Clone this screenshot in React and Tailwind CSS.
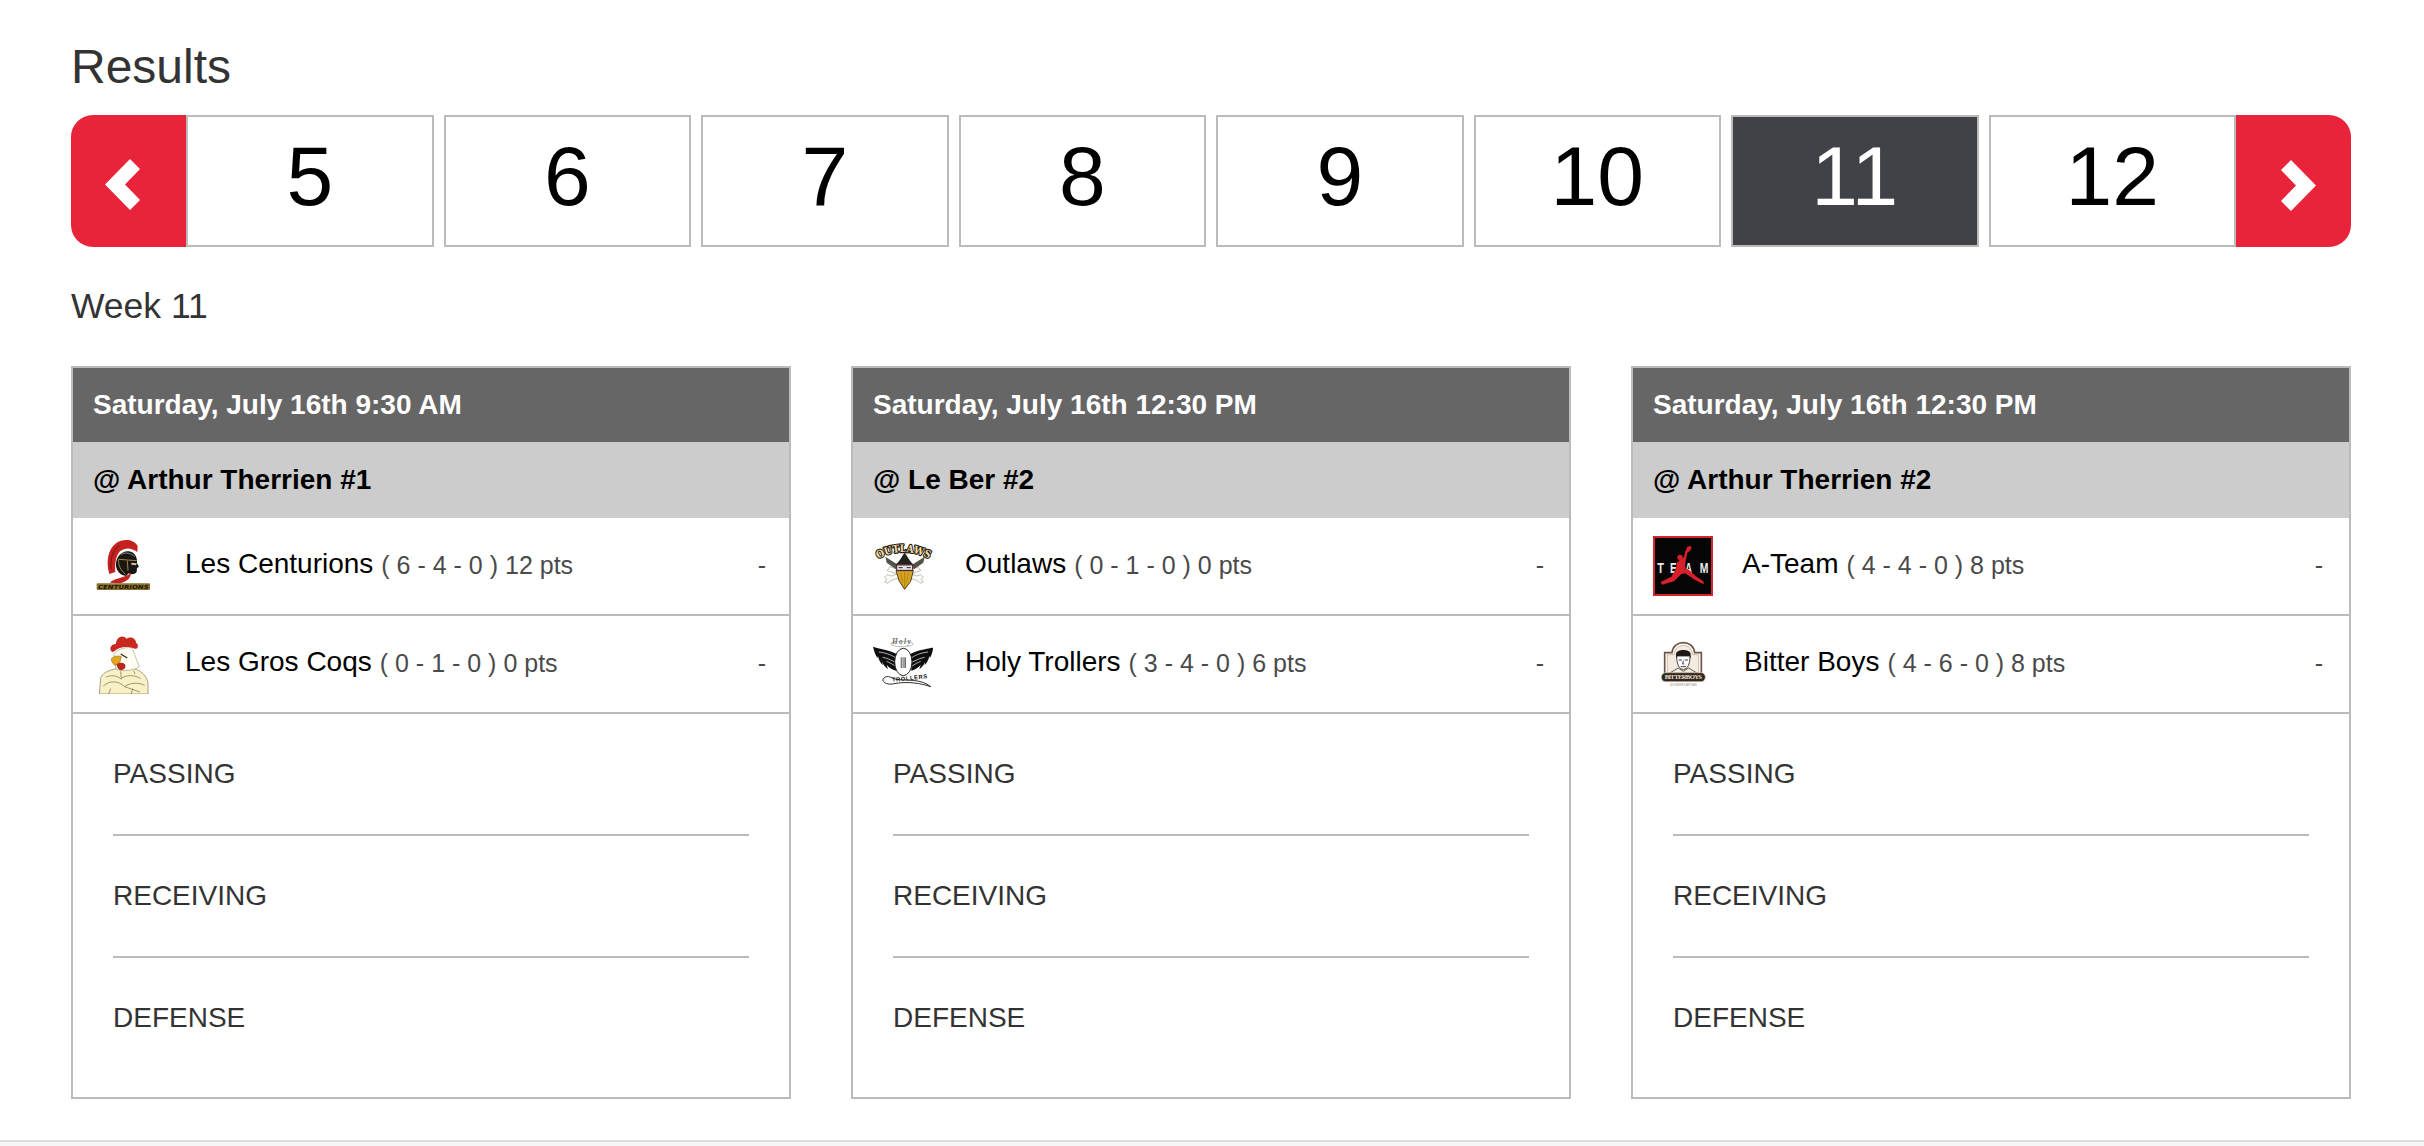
import React from "react";

function Chevron({ flip }) {
  return (
    <svg width="35" height="52" viewBox="0 0 35 52" className={flip ? "rotate-180" : ""}>
      <polygon points="0,25.5 25,0 35,10 20,25.5 35,41 25,51" fill="#ffffff" />
    </svg>
  );
}

function Centurions() {
  return (
    <svg width="60" height="60" viewBox="9 18 180 180">
      <path d="M58 132 C48 100 52 60 78 40 C98 26 130 26 143 48 L142 66 C125 52 104 52 90 64 C78 76 74 100 76 126 Z" fill="#c4211f" />
      <path d="M64 118 C60 92 66 62 88 46" fill="none" stroke="#7d1112" strokeWidth="3" />
      <path d="M78 108 C76 82 94 62 116 64 C134 66 143 82 141 100 L147 110 L141 114 L140 126 C134 134 122 134 116 130 L108 138 C92 136 80 124 78 108 Z" fill="#191715" />
      <path d="M86 88 L140 92 M112 92 L114 122 M86 88 C84 104 92 122 106 132" fill="none" stroke="#a9843a" strokeWidth="3" />
      <path d="M92 74 C104 66 122 68 134 80" fill="none" stroke="#8d8a82" strokeWidth="3" />
      <path d="M124 98 L140 100 L138 106 L124 104 Z" fill="#c9c4b4" />
      <path d="M60 158 C72 144 100 146 122 130 C124 146 106 156 90 160 Z" fill="#c4211f" />
      <rect x="20" y="160" width="160" height="20" rx="3" fill="#8b7131" />
      <text x="100" y="176" textAnchor="middle" fontFamily="'DejaVu Sans',sans-serif" fontWeight="700" fontStyle="italic" fontSize="17" fill="#17130c" textLength="152" lengthAdjust="spacingAndGlyphs">CENTURIONS</text>
    </svg>
  );
}

function Coqs() {
  return (
    <svg width="60" height="60" viewBox="9 12 180 180">
      <path d="M28 192 L32 145 C36 130 52 122 78 116 L132 116 C152 122 168 134 174 158 L174 192 Z" fill="#f8f0c6" stroke="#7d7550" strokeWidth="2" />
      <path d="M78 118 L72 72 C84 56 110 50 126 54 C134 70 140 92 148 110 C136 120 100 126 78 118 Z" fill="#fffdf2" stroke="#8a8566" strokeWidth="1.5" />
      <path d="M66 66 C56 56 62 42 78 42 C78 22 98 12 110 26 C120 18 138 24 138 38 C148 44 144 58 134 56 C120 48 96 50 84 56 C76 60 72 66 66 66 Z" fill="#c9281e" />
      <path d="M64 86 C72 78 84 76 94 80 L88 102 L74 106 C68 100 64 94 64 86 Z" fill="#e3a51d" stroke="#7a5a12" strokeWidth="1.5" />
      <path d="M80 102 C92 96 104 98 106 106 C108 116 98 122 90 120 C84 118 80 110 80 102 Z" fill="#b9261d" />
      <path d="M92 72 L112 84" stroke="#33261a" strokeWidth="4" />
      <path d="M40 168 C60 150 84 152 104 170 L150 186 M48 142 C62 134 78 136 92 146 C108 134 134 134 152 146 M104 170 C120 158 144 156 164 166 M92 124 L94 148 M62 176 L56 192 M128 176 L124 192 M130 122 L136 132" fill="none" stroke="#7d7550" strokeWidth="2.2" />
    </svg>
  );
}

function Outlaws() {
  return (
    <svg width="60" height="60" viewBox="15 12 180 180">
      <g stroke="#77776f" strokeWidth="1.4" fill="#fbfbf5" strokeLinejoin="round">
        <path d="M150 104 L70 132 L58 128 L50 136 L56 142 L50 150 L60 154 L68 146 L158 116 Z" />
        <path d="M66 104 L146 132 L158 128 L166 136 L160 142 L166 150 L156 154 L148 146 L58 116 Z" />
      </g>
      <path d="M52 74 L92 100 L84 112 L56 92 Z M170 74 L130 100 L138 112 L166 92 Z" fill="#55524a" />
      <path d="M82 98 C96 88 100 74 110 62 C120 74 124 88 138 98 Z" fill="#24211b" />
      <path d="M84 116 L136 116 L128 148 L110 172 L94 148 Z" fill="#d8a31f" stroke="#2a2418" strokeWidth="2.5" />
      <path d="M110 120 L110 168 M98 122 L104 152 M122 122 L116 152" stroke="#8a6810" strokeWidth="1.6" fill="none" />
      <rect x="86" y="99" width="48" height="16" fill="#e9e4ea" stroke="#47182a" strokeWidth="3" />
      <path d="M92 107 L104 107 M116 107 L128 107" stroke="#222" strokeWidth="3" />
      <path id="outlaws-arc" d="M27 82 Q106 38 186 82" fill="none" />
      <text fontFamily="'DejaVu Serif',serif" fontWeight="700" fontSize="31" fill="#f3dfa0" stroke="#26221a" strokeWidth="7" strokeLinejoin="round" paintOrder="stroke">
        <textPath href="#outlaws-arc" startOffset="50%" textAnchor="middle" textLength="160" lengthAdjust="spacingAndGlyphs">OUTLAWS</textPath>
      </text>
    </svg>
  );
}

function Holy() {
  return (
    <svg width="60" height="60" viewBox="15 12 180 180">
      <ellipse cx="102" cy="42" rx="34" ry="8" fill="none" stroke="#8b8b8b" strokeWidth="1.6" />
      <text x="102" y="42" textAnchor="middle" fontFamily="'Liberation Serif',serif" fontStyle="italic" fontWeight="700" fontSize="22" letterSpacing="4" fill="#6b6b6b">Holy</text>
      <path d="M15 50 C40 58 66 60 86 72 L84 122 C72 118 62 112 56 104 L60 118 C50 110 44 102 42 94 L44 106 C36 96 32 88 30 78 L28 84 C22 74 18 62 15 50 Z" fill="#0d0d0d" />
      <path d="M196 52 C172 58 146 60 128 72 L130 122 C142 118 152 112 158 104 L154 118 C164 110 170 102 172 94 L170 106 C178 96 182 88 184 78 L186 84 C192 74 194 62 196 52 Z" fill="#0d0d0d" />
      <g stroke="#ffffff" strokeWidth="2" fill="none">
        <path d="M32 66 C48 68 66 72 84 84 M44 82 C56 84 70 90 84 98 M56 94 C64 98 74 102 84 110" />
        <path d="M180 66 C164 68 146 72 130 84 M170 82 C158 84 144 90 130 98 M158 94 C150 98 140 102 130 110" />
      </g>
      <ellipse cx="106" cy="96" rx="26" ry="41" fill="#ffffff" stroke="#222" strokeWidth="3" />
      <rect x="98" y="82" width="16" height="32" fill="#6e6e6e" />
      <path d="M103 82 V114 M108 82 V114" stroke="#fff" strokeWidth="2" />
      <path d="M44 150 C52 132 70 142 84 148 C116 152 160 146 188 170 C160 160 120 154 84 160 C68 164 50 164 44 150 Z" fill="none" stroke="#111" strokeWidth="2.6" />
      <text x="126" y="150" textAnchor="middle" fontFamily="'Liberation Sans',sans-serif" fontWeight="700" fontSize="17" fill="#111" letterSpacing="2" transform="rotate(-6 126 150)">TROLLERS</text>
    </svg>
  );
}

function ATeam() {
  return (
    <svg width="60" height="60" viewBox="15 12 180 180">
      <rect x="18" y="15" width="174" height="174" fill="#050505" stroke="#d8232f" strokeWidth="6" />
      <g fontFamily="'Liberation Sans',sans-serif" fontWeight="700" fontSize="46" fill="#ececec" textAnchor="middle">
        <text x="38" y="124" textLength="20" lengthAdjust="spacingAndGlyphs">T</text>
        <text x="76" y="124" textLength="20" lengthAdjust="spacingAndGlyphs">E</text>
        <text x="122" y="124" textLength="20" lengthAdjust="spacingAndGlyphs">A</text>
        <text x="168" y="124" textLength="26" lengthAdjust="spacingAndGlyphs">M</text>
      </g>
      <path d="M118 44 L128 42 L131 48 L126 56 L118 62 L112 92 L112 110 L120 112 L146 134 L166 148 L168 156 L160 154 L138 142 L112 124 L100 126 L78 148 L42 158 L38 150 L70 134 L84 110 L86 92 L96 84 L108 76 L112 58 Z" fill="#d8202a" />
      <circle cx="96" cy="76" r="8" fill="#d8202a" />
    </svg>
  );
}

function Bitter() {
  return (
    <svg width="60" height="60" viewBox="15 12 180 180">
      <path d="M50 132 L50 68 L72 68 C74 48 90 38 106 38 C122 38 138 48 140 68 L160 68 L160 132 Z" fill="#ffffff" stroke="#6d5341" strokeWidth="5" />
      <path d="M58 128 L58 74 L78 74 C80 56 92 46 106 46 C120 46 132 56 134 74 L152 74 L152 128 Z" fill="#f3ebe0" stroke="#b5a08a" strokeWidth="2" />
      <path d="M84 72 C86 56 126 56 128 72 L128 84 L84 84 Z" fill="#1e1915" />
      <path d="M86 78 C86 104 94 118 106 118 C118 118 126 104 126 78 Z" fill="#ffffff" stroke="#2a2420" strokeWidth="2.5" />
      <path d="M92 90 L102 90 M110 90 L120 90 M106 92 L104 102 L109 102 M98 110 L114 110" stroke="#2a2420" strokeWidth="2.6" fill="none" />
      <path d="M64 130 L90 114 L106 124 L122 114 L148 130" stroke="#2a2420" strokeWidth="2.2" fill="none" />
      <rect x="40" y="128" width="132" height="27" rx="13" fill="#33281f" stroke="#d9cdbd" strokeWidth="2" />
      <text x="106" y="148" textAnchor="middle" fontFamily="'Liberation Serif',serif" fontWeight="700" fontSize="20" fill="#eadfce" textLength="112" lengthAdjust="spacing">BITTERBOYS</text>
      <text x="106" y="169" textAnchor="middle" fontFamily="'Liberation Sans',sans-serif" fontSize="9" fill="#a79d90" textLength="82" lengthAdjust="spacing">LES BIERES ARTISAN</text>
    </svg>
  );
}

const games = [
  {
    time: "Saturday, July 16th 9:30 AM",
    place: "@ Arthur Therrien #1",
    pad: "pr-[23px]",
    teams: [
      { Logo: Centurions, name: "Les Centurions", rec: "( 6 - 4 - 0 ) 12 pts", gap: "ml-[32px]" },
      { Logo: Coqs, name: "Les Gros Coqs", rec: "( 0 - 1 - 0 ) 0 pts", gap: "ml-[32px]" },
    ],
  },
  {
    time: "Saturday, July 16th 12:30 PM",
    place: "@ Le Ber #2",
    pad: "pr-[25px]",
    teams: [
      { Logo: Outlaws, name: "Outlaws", rec: "( 0 - 1 - 0 ) 0 pts", gap: "ml-[32px]" },
      { Logo: Holy, name: "Holy Trollers", rec: "( 3 - 4 - 0 ) 6 pts", gap: "ml-[32px]" },
    ],
  },
  {
    time: "Saturday, July 16th 12:30 PM",
    place: "@ Arthur Therrien #2",
    pad: "pr-[26px]",
    teams: [
      { Logo: ATeam, name: "A-Team", rec: "( 4 - 4 - 0 ) 8 pts", gap: "ml-[29px]" },
      { Logo: Bitter, name: "Bitter Boys", rec: "( 4 - 6 - 0 ) 8 pts", gap: "ml-[31px]" },
    ],
  },
];

const weeks = ["5", "6", "7", "8", "9", "10", "11", "12"];

function Week({ label }) {
  const active = label === "11";
  return (
    <div
      className={
        "flex-1 min-w-0 border-2 border-[#bbbbbb] flex items-center justify-center pb-[11px] text-[84px] leading-none " +
        (active ? "bg-[#414247] text-white" : "bg-white text-black")
      }
    >
      {label}
    </div>
  );
}

function Team({ team, pad }) {
  const { Logo, name, rec, gap } = team;
  return (
    <div className={"h-[98px] border-b-2 border-[#bbbbbb] flex items-center pl-[20px] " + pad}>
      <div className="w-[60px] h-[60px] shrink-0">
        <Logo />
      </div>
      <div className={"flex-1 flex items-baseline min-w-0 pb-[4px] " + gap}>
        <span className="text-[28px] text-black">{name}</span>
        <span className="ml-[8px] text-[25px] text-[#4a4a4a] relative top-[1px]">{rec}</span>
      </div>
      <span className="text-[25px] text-[#4a4a4a]">-</span>
    </div>
  );
}

function Stat({ label, last }) {
  return (
    <div className={"flex items-center text-[28px] text-[#333333] " + (last ? "h-[120px]" : "h-[122px] border-b-2 border-[#bbbbbb]")}>
      {label}
    </div>
  );
}

function Card({ game }) {
  return (
    <div className="border-2 border-[#bbbbbb] h-[733px]">
      <div className="h-[74px] bg-[#666666] text-white font-bold text-[28px] flex items-center px-[20px]">{game.time}</div>
      <div className="h-[76px] bg-[#cccccc] text-black font-bold text-[28px] flex items-center px-[20px]">{game.place}</div>
      {game.teams.map((t) => (
        <Team key={t.name} team={t} pad={game.pad} />
      ))}
      <div className="px-[40px]">
        <Stat label="PASSING" />
        <Stat label="RECEIVING" />
        <Stat label="DEFENSE" last />
      </div>
    </div>
  );
}

export default function App() {
  return (
    <div className="h-[1146px] bg-white font-['Liberation_Sans',Arial,sans-serif] flex flex-col overflow-hidden">
      <div className="flex-1 pl-[71px] pr-[73px]">
        <h1 className="h-[115px] pt-[39px] text-[48px] leading-[55px] text-[#333333]">Results</h1>
        <div className="flex h-[132px]">
          <div className="w-[115px] shrink-0 bg-[#e9243a] rounded-l-[22px] flex items-center pl-[34px] pt-[7px]">
            <Chevron />
          </div>
          <div className="flex-1 min-w-0 flex gap-[10px]">
            {weeks.map((w) => (
              <Week key={w} label={w} />
            ))}
          </div>
          <div className="w-[115px] shrink-0 bg-[#e9243a] rounded-r-[22px] flex items-center justify-end pr-[35px] pt-[7px]">
            <Chevron flip />
          </div>
        </div>
        <h2 className="h-[119px] pt-[38px] text-[35.5px] leading-[42px] text-[#333333]">Week 11</h2>
        <div className="grid grid-cols-3 gap-[60px]">
          {games.map((g) => (
            <Card key={g.place} game={g} />
          ))}
        </div>
      </div>
      <div className="h-[6px] bg-[#f5f5f5] border-t-2 border-[#dddddd]"></div>
    </div>
  );
}
